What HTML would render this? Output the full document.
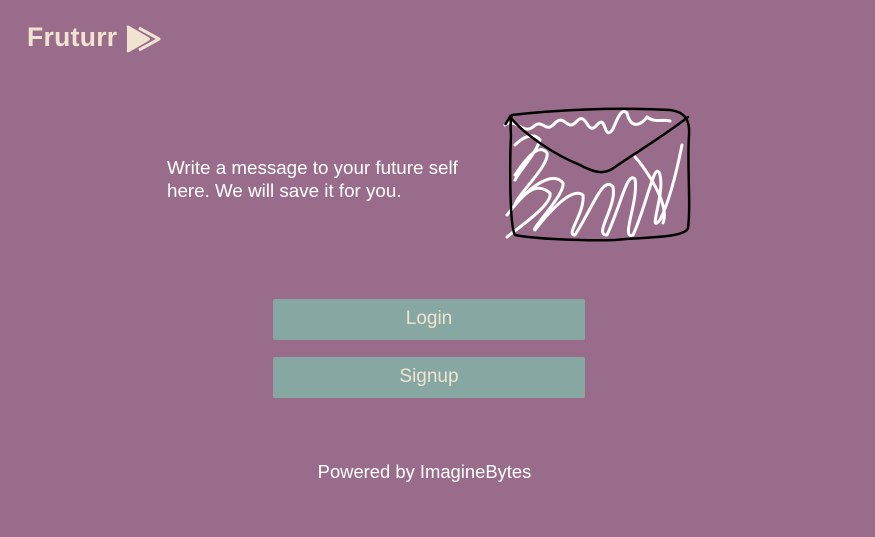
<!DOCTYPE html>
<html><head><meta charset="utf-8"><style>
html,body{margin:0;padding:0}
body{width:875px;height:537px;background:#9a6c8b;position:relative;overflow:hidden;font-family:"Liberation Sans",sans-serif}
.logo{position:absolute;left:27px;top:22px;font-size:26.5px;font-weight:bold;color:#f0e4d0;letter-spacing:0.3px}
.intro{position:absolute;left:167px;top:156px;color:#fff;font-size:18.8px;line-height:23px;width:310px}
.btn{position:absolute;left:273px;width:312px;height:41px;background:#86a7a2;border-radius:2px;color:#f0e4d0;font-size:19px;text-align:center;line-height:40px}
.footer{position:absolute;top:461px;left:0;width:849px;text-align:center;color:#fff;font-size:18.4px}
</style></head><body>
<div class="logo">Fruturr</div>
<svg style="position:absolute;left:125px;top:24px" width="38" height="30" viewBox="0 0 38 30">
<path d="M14 4 L34 15 L14 26" fill="none" stroke="#f0e4d0" stroke-width="3" stroke-linejoin="round"/>
<path d="M3 3 Q2 2 4 3 L23 14 Q25 15 23 16 L4 27 Q2 28 3 26 Z" fill="#f0e4d0" stroke="#f0e4d0" stroke-width="2" stroke-linejoin="round"/>
</svg>
<div class="intro">Write a message to your future self here. We will save it for you.</div>
<svg style="position:absolute;left:495px;top:95px" width="205" height="155" viewBox="0 0 205 155">
<g fill="none" stroke="#fff" stroke-width="3" stroke-linecap="round" stroke-linejoin="round">
<path d="M10 30 C20 22 28 40 38 32 C48 22 50 40 60 28 C70 18 72 38 82 26 C92 16 92 42 102 30 C112 18 108 48 118 34 C122 25 126 12 132 18 C136 35 146 30 152 22 C160 28 166 24 175 26"/>
<path d="M20 50 C30 40 40 38 45 45 C40 60 25 75 20 85"/>
<path d="M20 80 C32 62 44 48 52 58 C55 70 22 100 20 110 C35 92 58 75 68 88 C70 100 35 135 40 135 C58 112 78 92 88 100 C90 118 70 140 80 140 C98 112 108 80 118 92 C122 112 98 140 112 140 C126 110 132 76 140 84 C144 106 125 145 138 140 C152 110 160 62 165 80 C170 100 152 140 165 125 C175 105 183 70 187 50"/>
<path d="M12 120 C28 100 40 85 55 98 C58 110 20 135 12 142"/>
<path d="M140 62 C152 75 175 110 168 128"/>
</g>
<path d="M17 20 C60 15 120 12 175 15 C190 17 195 25 194 40 C192 70 196 110 193 133 C190 143 150 142 120 145 C90 146 40 144 20 140 C14 130 15 60 16 40 C15 30 16 22 17 20 Z" fill="none" stroke="#000" stroke-width="2.5" stroke-linejoin="round"/>
<path d="M15 22 C30 40 60 60 85 70 C100 78 110 80 120 72 C145 55 170 40 193 22" fill="none" stroke="#000" stroke-width="2.5" stroke-linecap="round"/>
<path d="M10 30 L16 20" stroke="#000" stroke-width="2.5"/>
</svg>
<div class="btn" style="top:299px">Login</div>
<div class="btn" style="top:357px">Signup</div>
<div class="footer">Powered by ImagineBytes</div>
</body></html>
